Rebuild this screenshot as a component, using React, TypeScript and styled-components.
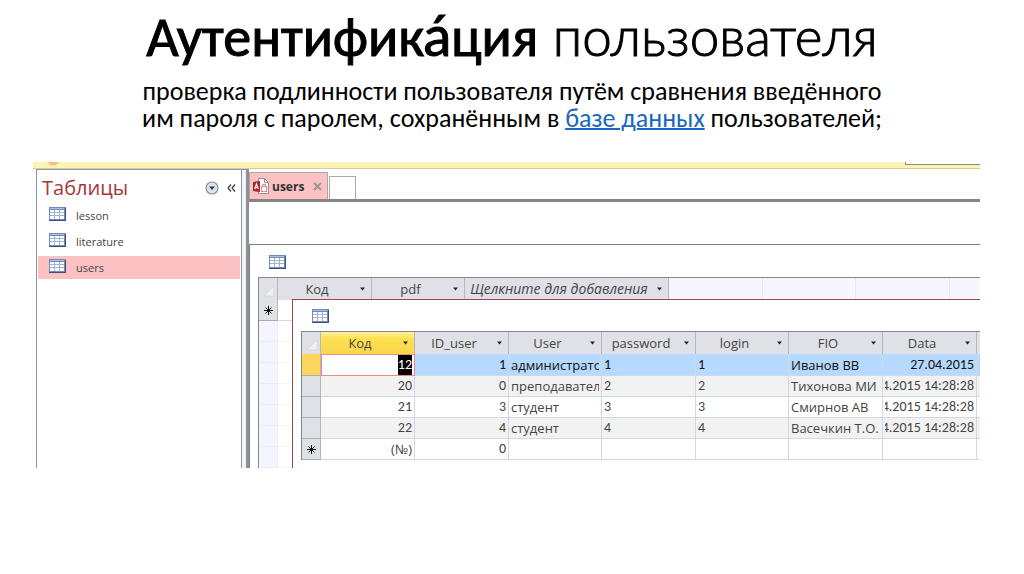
import React from "react";
import styled, { createGlobalStyle, css } from "styled-components";

const GlobalStyle = createGlobalStyle`
  *, *::before, *::after { box-sizing: border-box; }
  body { margin: 0; background: #fff; color: #000; }
  button { margin: 0; padding: 0; border: 0; background: none; color: inherit; font: inherit; }
`;

const calibri = `Carlito, Lato, "Open Sans", sans-serif`;
const segoe = `"Open Sans", "Noto Sans", sans-serif`;

const Slide = styled.main`
  display: flex;
  flex-direction: column;
  font-family: ${calibri};
`;

const Title = styled.h1`
  height: 70px;
  margin: 0;
  padding-top: 4px;
  text-align: center;
  font-family: Lato, Carlito, sans-serif;
  font-size: 53px;
  line-height: 64px;
  font-weight: 300;
  white-space: nowrap;
  -webkit-text-stroke: 1px #000;
`;

const Strong = styled.strong`
  font-family: ${calibri};
  font-size: 56px;
  font-weight: 400;
`;

const Lead = styled.p`
  margin: 8px 0 0;
  text-align: center;
  font-size: 26px;
  line-height: 27px;
  white-space: nowrap;
`;

const Link = styled.a`
  color: #1a66c0;
  text-decoration: underline;
  text-decoration-thickness: 2px;
`;

const AppWindow = styled.section`
  margin: 30px 44px 0 33px;
  overflow: hidden;
  font-family: ${segoe};
  color: #444;
`;

const MessageBar = styled.div`
  display: flex;
  justify-content: space-between;
  height: 7px;
  padding-left: 13px;
  background: #fbf4b4;
  border-bottom: 1px solid #d2cd9c;
`;

const RibbonCorner = styled.div`
  width: 75px;
  height: 3px;
  background: #fff;
  border: solid #8a8a7a;
  border-width: 0 0 1px 1px;
`;

const Workspace = styled.div`
  display: flex;
  margin-left: 3px;
`;

const Nav = styled.nav`
  flex: none;
  width: 206px;
  padding: 0 1px;
  border: solid #8c95a3;
  border-width: 1px 1px 0 1px;
`;

const NavHeader = styled.div`
  display: flex;
  align-items: center;
  gap: 5px;
  height: 34px;
  padding: 2px 2px 0 4px;
`;

const NavTitle = styled.h2`
  flex: 1;
  margin: 0;
  font-size: 20px;
  line-height: 24px;
  font-weight: 400;
  color: #a4373a;
`;

const IconButton = styled.button`
  display: flex;
  align-items: center;
  justify-content: center;
  width: 14px;
  height: 16px;
`;

const NavList = styled.ul`
  display: flex;
  flex-direction: column;
  gap: 3px;
  margin: 0;
  padding: 0;
  list-style: none;
`;

const NavItem = styled.button<{ $active?: boolean }>`
  display: flex;
  align-items: center;
  gap: 10px;
  width: 100%;
  height: 23px;
  padding-left: 11px;
  font-size: 11px;
  line-height: 20px;
  background: ${(p) => (p.$active ? "#fcc1c3" : "transparent")};

  svg { margin-bottom: 3px; }
`;

const Splitter = styled.div`
  flex: none;
  width: 4px;
  background: #f0f3f7;
  border-top: 1px solid #8c95a3;
`;

const Documents = styled.div`
  flex: 1;
  min-width: 0;
  border-left: 3px solid #8f8f8f;
`;

const TabStrip = styled.div`
  display: flex;
  align-items: flex-end;
  gap: 1px;
  height: 30px;
  padding-left: 0;
`;

const Tab = styled.button`
  display: flex;
  align-items: center;
  gap: 3px;
  height: 27px;
  width: 79px;
  padding: 0 5px 0 3px;
  background: #fcc1c3;
  border: 1px solid #a9a9a9;
  border-bottom: 0;
  font-size: 12px;
  font-weight: 700;
  color: #333;

  svg:last-child { margin-left: auto; }
`;

const BlankTab = styled.button`
  width: 27px;
  height: 23px;
  background: #fff;
  border: 1px solid #a9a9a9;
  border-bottom: 0;
`;

const Canvas = styled.div`
  padding-top: 42px;
  border-top: 3px solid #858585;
`;

const SubWindow = styled.div`
  border: solid #7f7f85;
  border-width: 1px 0 0 1px;
  padding-left: 8px;
`;

const WindowIcon = styled.div<{ $inner?: boolean }>`
  display: flex;
  padding: ${(p) => (p.$inner ? "9px 0 8px 11px" : "10px 0 8px 11px")};
`;

const Stack = styled.div`
  display: grid;
  grid-template-columns: minmax(0, 1fr);

  > * { grid-area: 1 / 1; }
`;

const SheetArea = styled.div`
  overflow: hidden;
  border: solid #85858d;
  border-width: 1px 0 0 1px;
`;

const InnerWindow = styled.div`
  z-index: 1;
  margin: 22px 0 0 34px;
  padding: 0 0 8px 8px;
  overflow: hidden;
  background: #fff;
  border: solid #a3454f;
  border-width: 1px 0 0 1px;
`;

const Sheet = styled.table`
  table-layout: fixed;
  width: 0;
  border-collapse: separate;
  border-spacing: 0;
  font-size: 13px;
  line-height: 20px;
`;

const HeadCell = styled.th<{ $tone?: "selected" | "empty" }>`
  height: 22px;
  padding: 0;
  font-weight: 400;
  background: #dfe1e6;
  border-right: 1px solid #b4b7be;

  ${(p) =>
    p.$tone === "selected" &&
    css`
      background: linear-gradient(#fff0a0, #ffe14f 30%, #f9d54e);
    `}
  ${(p) =>
    p.$tone === "empty" &&
    css`
      background: #f6f7fe;
      border-right-color: #e8e8f0;
    `}
`;

const HeadLabel = styled.div<{ $italic?: boolean }>`
  display: flex;
  align-items: center;
  padding-right: 5px;
  font-style: ${(p) => (p.$italic ? "italic" : "normal")};
  font-size: ${(p) => (p.$italic ? "14px" : "13px")};

  > span { flex: 1; text-align: center; white-space: nowrap; }
`;

const CaretButton = styled.button`
  display: flex;
  align-items: center;
  height: 20px;
  padding-left: 3px;
`;

const Selector = styled.td<{ $current?: boolean; $pale?: boolean }>`
  height: 21px;
  padding: 0;
  text-align: center;
  background: ${(p) => (p.$current ? "#ffd65c" : p.$pale ? "#f5f6fd" : "#dfe1e6")};
  border-right: 1px solid ${(p) => (p.$pale ? "#ececf4" : "#b4b7be")};
  border-bottom: 1px solid ${(p) => (p.$pale ? "#ececf4" : "#a9acb4")};

  svg { display: block; margin: auto; }
`;

const Cell = styled.td<{ $row?: "current" | "alt"; $faint?: boolean; $focus?: boolean }>`
  height: 21px;
  padding: 0 2px;
  background: ${(p) => (p.$row === "current" ? "#b5d9ff" : p.$row === "alt" ? "#f2f2f2" : "#fff")};
  color: ${(p) => (p.$row === "current" ? "#111" : "#444")};
  border-right: 1px solid ${(p) => (p.$faint ? "#f3f3f8" : "#d0d7e5")};
  border-bottom: 1px solid ${(p) => (p.$faint ? "#f3f3f8" : "#d0d7e5")};

  ${(p) =>
    p.$focus &&
    css`
      padding: 0 2px 0 1px;
      background: #fff;
      border: 1px solid #f08a8a;
    `}
`;

const Value = styled.div<{ $end?: boolean; $numeric?: boolean }>`
  display: flex;
  justify-content: ${(p) => (p.$end ? "flex-end" : "flex-start")};
  height: 20px;
  overflow: hidden;
  white-space: nowrap;
  ${(p) =>
    p.$numeric &&
    css`
      font-family: ${calibri};
      font-size: 14px;
    `}
`;

const Selection = styled.mark`
  background: #000;
  color: #fff;
`;

const TableIcon = () => (
  <svg width="17" height="14" viewBox="0 0 17 14" aria-hidden="true">
    <rect x="0" y="0" width="17" height="14" fill="#6f8cbd" />
    <rect x="1" y="3" width="14" height="9" fill="#fff" />
    <path d="M1 1h14v1H1z" fill="#a9c0e4" />
    <path d="M1 5.500h14M1 8.500h14M5.500 3v9M10.500 3v9" stroke="#9db4d8" strokeWidth="1" />
    <path d="M0 13.500h17M16.500 1v13" stroke="#3d4f74" strokeWidth="1" />
  </svg>
);

const Caret = () => (
  <svg width="7" height="4" viewBox="0 0 7 4" aria-hidden="true">
    <path d="M1 .5h5L3.500 3.500z" fill="#222" />
  </svg>
);

const NewRowMark = () => (
  <svg width="11" height="11" viewBox="0 0 11 11" aria-hidden="true">
    <path d="M5.500 1v9M1 5.500h9M2.500 2.500l6 6M8.500 2.500l-6 6" stroke="#111" strokeWidth="1" />
  </svg>
);

const CornerMark = () => (
  <svg width="18" height="20" viewBox="0 0 18 20" aria-hidden="true" style={{ display: "block" }}>
    <path d="M15 7v10H5z" fill="#eef0f4" stroke="#cfd3da" strokeWidth="0.6" />
  </svg>
);

const AccessFormIcon = () => (
  <svg width="16" height="17" viewBox="0 0 16 17" aria-hidden="true">
    <path d="M5.500 .5h6l4 4v11h-10z" fill="#fff" stroke="#9a8a8c" />
    <path d="M11.500 .5v4h4" fill="none" stroke="#9a8a8c" />
    <rect x="8.500" y="8.500" width="5" height="5" fill="none" stroke="#d98a8e" />
    <path d="M9.500 8V6.500h3V8" fill="none" stroke="#d98a8e" />
    <path d="M0 4l7-1v11l-7-1z" fill="#a8262c" />
    <path d="M1.800 11L3.500 6l1.700 5M2.500 9.500h2" fill="none" stroke="#fff" strokeWidth="1.200" />
  </svg>
);

const CloseIcon = () => (
  <svg width="9" height="9" viewBox="0 0 9 9" aria-hidden="true">
    <path d="M1 1l7 7M8 1L1 8" stroke="#999" strokeWidth="2" />
  </svg>
);

const RoundCaret = () => (
  <svg width="14" height="14" viewBox="0 0 14 14" aria-hidden="true">
    <circle cx="7" cy="7" r="6" fill="#dde1ea" stroke="#8a919d" strokeWidth="1.200" />
    <path d="M4 5.500h6L7 9z" fill="#2f3b4e" />
  </svg>
);

const Chevrons = () => (
  <svg width="9" height="8" viewBox="0 0 9 8" aria-hidden="true">
    <path d="M4 .5L1 4l3 3.500M8 .5L5 4l3 3.500" fill="none" stroke="#333" strokeWidth="1.200" />
  </svg>
);

const Badge = () => (
  <svg width="14" height="4" viewBox="0 0 14 4" aria-hidden="true">
    <path d="M1 0h12L9 3.500H5z" fill="#f0c27c" />
  </svg>
);

const columns = ["Код", "ID_user", "User", "password", "login", "FIO", "Data"];
const endAligned = [true, true, false, false, false, false, true];

const records = [
  ["12", "1", "администратор", "1", "1", "Иванов ВВ", "27.04.2015"],
  ["20", "0", "преподаватель", "2", "2", "Тихонова МИ", "27.04.2015 14:28:28"],
  ["21", "3", "студент", "3", "3", "Смирнов АВ", "27.04.2015 14:28:28"],
  ["22", "4", "студент", "4", "4", "Васечкин Т.О.", "27.04.2015 14:28:28"],
  ["(№)", "0", "", "", "", "", ""],
];

const tables = ["lesson", "literature", "users"];

function Header({ label, italic, selected }: { label: string; italic?: boolean; selected?: boolean }) {
  return (
    <HeadCell scope="col" $tone={selected ? "selected" : undefined}>
      <HeadLabel $italic={italic}>
        <span>{label}</span>
        <CaretButton type="button" aria-label={`Фильтр: ${label}`}>
          <Caret />
        </CaretButton>
      </HeadLabel>
    </HeadCell>
  );
}

function LiteratureSheet() {
  return (
    <Sheet>
      <colgroup>
        {[19, 94, 93, 204, 94, 93, 94, 94].map((w, i) => (
          <col key={i} width={w} />
        ))}
      </colgroup>
      <thead>
        <tr>
          <HeadCell><CornerMark /></HeadCell>
          <Header label="Код" />
          <Header label="pdf" />
          <Header label="Щелкните для добавления" italic />
          {[0, 1, 2, 3].map((i) => (
            <HeadCell key={i} $tone="empty" />
          ))}
        </tr>
      </thead>
      <tbody>
        {[0, 1, 2, 3, 4, 5, 6, 7].map((i) => (
          <tr key={i}>
            <Selector $pale={i > 0}>{i === 0 && <NewRowMark />}</Selector>
            <Cell $faint={i > 0} />
          </tr>
        ))}
      </tbody>
    </Sheet>
  );
}

function UsersSheet() {
  return (
    <Sheet>
      <colgroup>
        {[19, 94, 94, 93, 94, 93, 94, 94, 94].map((w, i) => (
          <col key={i} width={w} />
        ))}
      </colgroup>
      <thead>
        <tr>
          <HeadCell><CornerMark /></HeadCell>
          {columns.map((c, i) => (
            <Header key={c} label={c} selected={i === 0} />
          ))}
          <HeadCell />
        </tr>
      </thead>
      <tbody>
        {records.map((record, r) => {
          const tone = r === 0 ? "current" : r % 2 === 1 && r < 4 ? "alt" : undefined;
          return (
            <tr key={r}>
              <Selector $current={r === 0}>{r === 4 && <NewRowMark />}</Selector>
              {record.map((v, c) => (
                <Cell key={c} $row={tone} $focus={r === 0 && c === 0}>
                  <Value $end={endAligned[c]} $numeric={/^\d/.test(v)}>
                    {r === 0 && c === 0 ? <Selection>{v}</Selection> : v}
                  </Value>
                </Cell>
              ))}
              <Cell $row={tone} />
            </tr>
          );
        })}
      </tbody>
    </Sheet>
  );
}

export default function App() {
  return (
    <Slide>
      <GlobalStyle />
      <Title>
        <Strong>Аутентифика́ция</Strong> пользователя
      </Title>
      <Lead>
        проверка подлинности пользователя путём сравнения введённого
        <br />
        им пароля с паролем, сохранённым в <Link href="#">базе данных</Link> пользователей;
      </Lead>
      <AppWindow>
        <MessageBar>
          <Badge />
          <RibbonCorner />
        </MessageBar>
        <Workspace>
          <Nav>
            <NavHeader>
              <NavTitle>Таблицы</NavTitle>
              <IconButton type="button" aria-label="Группы"><RoundCaret /></IconButton>
              <IconButton type="button" aria-label="Свернуть"><Chevrons /></IconButton>
            </NavHeader>
            <NavList>
              {tables.map((t) => (
                <li key={t}>
                  <NavItem type="button" $active={t === "users"}>
                    <TableIcon />
                    {t}
                  </NavItem>
                </li>
              ))}
            </NavList>
          </Nav>
          <Splitter />
          <Documents>
            <TabStrip>
              <Tab type="button">
                <AccessFormIcon />
                users
                <CloseIcon />
              </Tab>
              <BlankTab type="button" aria-label="Новая вкладка" />
            </TabStrip>
            <Canvas>
              <SubWindow>
                <WindowIcon><TableIcon /></WindowIcon>
                <Stack>
                  <SheetArea><LiteratureSheet /></SheetArea>
                  <InnerWindow>
                    <WindowIcon $inner><TableIcon /></WindowIcon>
                    <SheetArea><UsersSheet /></SheetArea>
                  </InnerWindow>
                </Stack>
              </SubWindow>
            </Canvas>
          </Documents>
        </Workspace>
      </AppWindow>
    </Slide>
  );
}
